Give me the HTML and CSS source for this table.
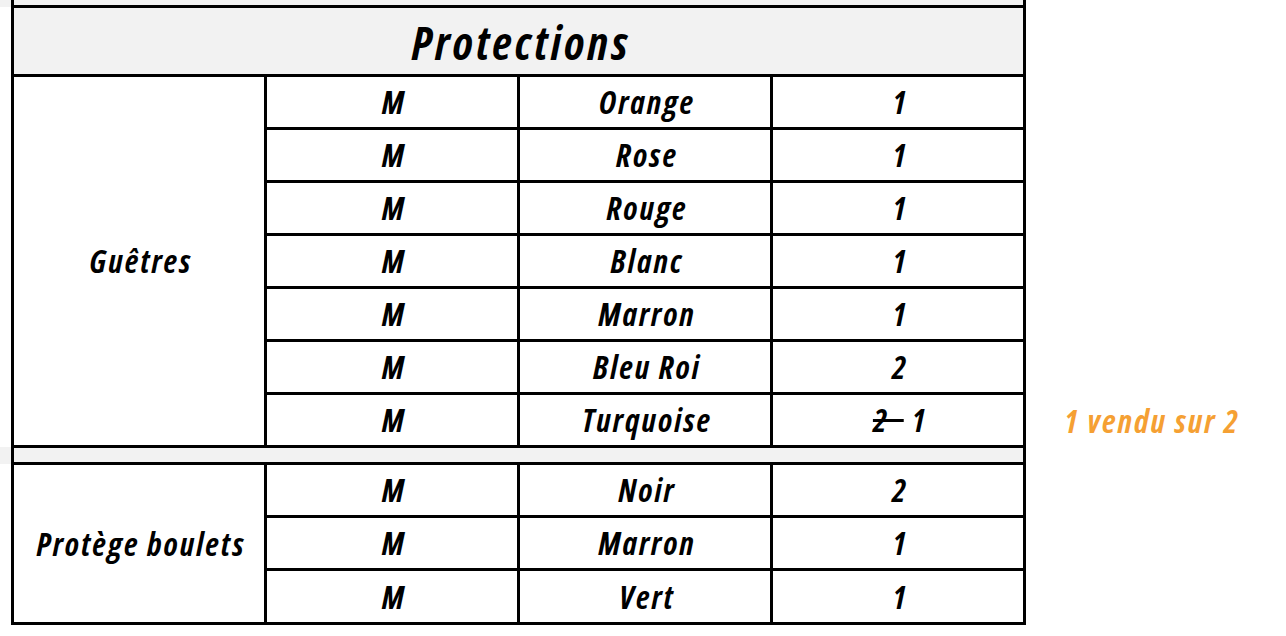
FILE: index.html
```html
<!DOCTYPE html>
<html lang="fr">
<head>
<meta charset="utf-8">
<title>Protections</title>
<link rel="stylesheet" href="styles.css">
</head>
<body>
<table class="stock">
  <colgroup>
    <col class="c-pad">
    <col class="c-main">
    <col class="c-main">
    <col class="c-main">
    <col class="c-main">
    <col class="c-note">
  </colgroup>
  <tbody>
    <tr class="r-top">
      <td class="pad gray"></td>
      <td class="gray edge" colspan="4"></td>
      <td class="note"></td>
    </tr>
    <tr class="r-head">
      <td class="pad"></td>
      <th class="title gray" colspan="4">Protections</th>
      <td class="note"></td>
    </tr>
    <tr class="r-item">
      <td class="pad"></td>
      <td class="cell" rowspan="7">Guêtres</td>
      <td class="cell">M</td><td class="cell">Orange</td><td class="cell">1</td>
      <td class="note"></td>
    </tr>
    <tr class="r-item">
      <td class="pad"></td>
      <td class="cell">M</td><td class="cell">Rose</td><td class="cell">1</td>
      <td class="note"></td>
    </tr>
    <tr class="r-item">
      <td class="pad"></td>
      <td class="cell">M</td><td class="cell">Rouge</td><td class="cell">1</td>
      <td class="note"></td>
    </tr>
    <tr class="r-item">
      <td class="pad"></td>
      <td class="cell">M</td><td class="cell">Blanc</td><td class="cell">1</td>
      <td class="note"></td>
    </tr>
    <tr class="r-item">
      <td class="pad"></td>
      <td class="cell">M</td><td class="cell">Marron</td><td class="cell">1</td>
      <td class="note"></td>
    </tr>
    <tr class="r-item">
      <td class="pad"></td>
      <td class="cell">M</td><td class="cell">Bleu Roi</td><td class="cell">2</td>
      <td class="note"></td>
    </tr>
    <tr class="r-item">
      <td class="pad"></td>
      <td class="cell">M</td><td class="cell">Turquoise</td><td class="cell"><del>2&nbsp;&nbsp;</del> 1</td>
      <td class="note">1 vendu sur 2</td>
    </tr>
    <tr class="r-gap">
      <td class="pad gray"></td>
      <td class="gray edge" colspan="4"></td>
      <td class="note"></td>
    </tr>
    <tr class="r-item">
      <td class="pad"></td>
      <td class="cell" rowspan="3">Protège boulets</td>
      <td class="cell">M</td><td class="cell">Noir</td><td class="cell">2</td>
      <td class="note"></td>
    </tr>
    <tr class="r-item">
      <td class="pad"></td>
      <td class="cell">M</td><td class="cell">Marron</td><td class="cell">1</td>
      <td class="note"></td>
    </tr>
    <tr class="r-item r-last">
      <td class="pad"></td>
      <td class="cell">M</td><td class="cell">Vert</td><td class="cell">1</td>
      <td class="note"></td>
    </tr>
  </tbody>
</table>
</body>
</html>
```
FILE: styles.css
```css
html, body {
  margin: 0;
  padding: 0;
  background: #ffffff;
}

.stock {
  border-collapse: collapse;
  border-spacing: 0;
  table-layout: fixed;
  width: 1278px;
  font-family: "Open Sans", "DejaVu Sans Condensed", sans-serif;
  font-stretch: 75%;
  font-style: italic;
  font-weight: 700;
  color: #000;
}

.c-pad { width: 12px; }
.c-main { width: 253px; }
.c-note { width: 254px; }

td, th {
  padding: 0;
  text-align: center;
  vertical-align: middle;
}

.gray { background: #f2f2f2; }

.pad { border: none; }
.note {
  border: none;
  color: #f5a033;
  font-size: 32px;
  letter-spacing: 2px;
}

.edge {
  border-left: 3px solid #000;
  border-right: 3px solid #000;
}

.r-top td { height: 5px; }
.r-top .edge { border-top: none; }

.r-head th { height: 65px; }
.title {
  border: 3px solid #000;
  font-size: 46px;
  font-weight: 700;
  font-style: italic;
  letter-spacing: 3px;
  padding: 1px 0 0 6px;
}

.r-item td { height: 50px; }
.r-last td { height: 51px; }
.cell {
  border: 3px solid #000;
  font-size: 32px;
  line-height: 1;
  letter-spacing: 2px;
  padding-left: 5px;
}

.r-gap td { height: 14px; }
.r-gap .edge {
  border-top: 3px solid #000;
  border-bottom: 3px solid #000;
}

del {
  text-decoration-thickness: 3px;
}
```
